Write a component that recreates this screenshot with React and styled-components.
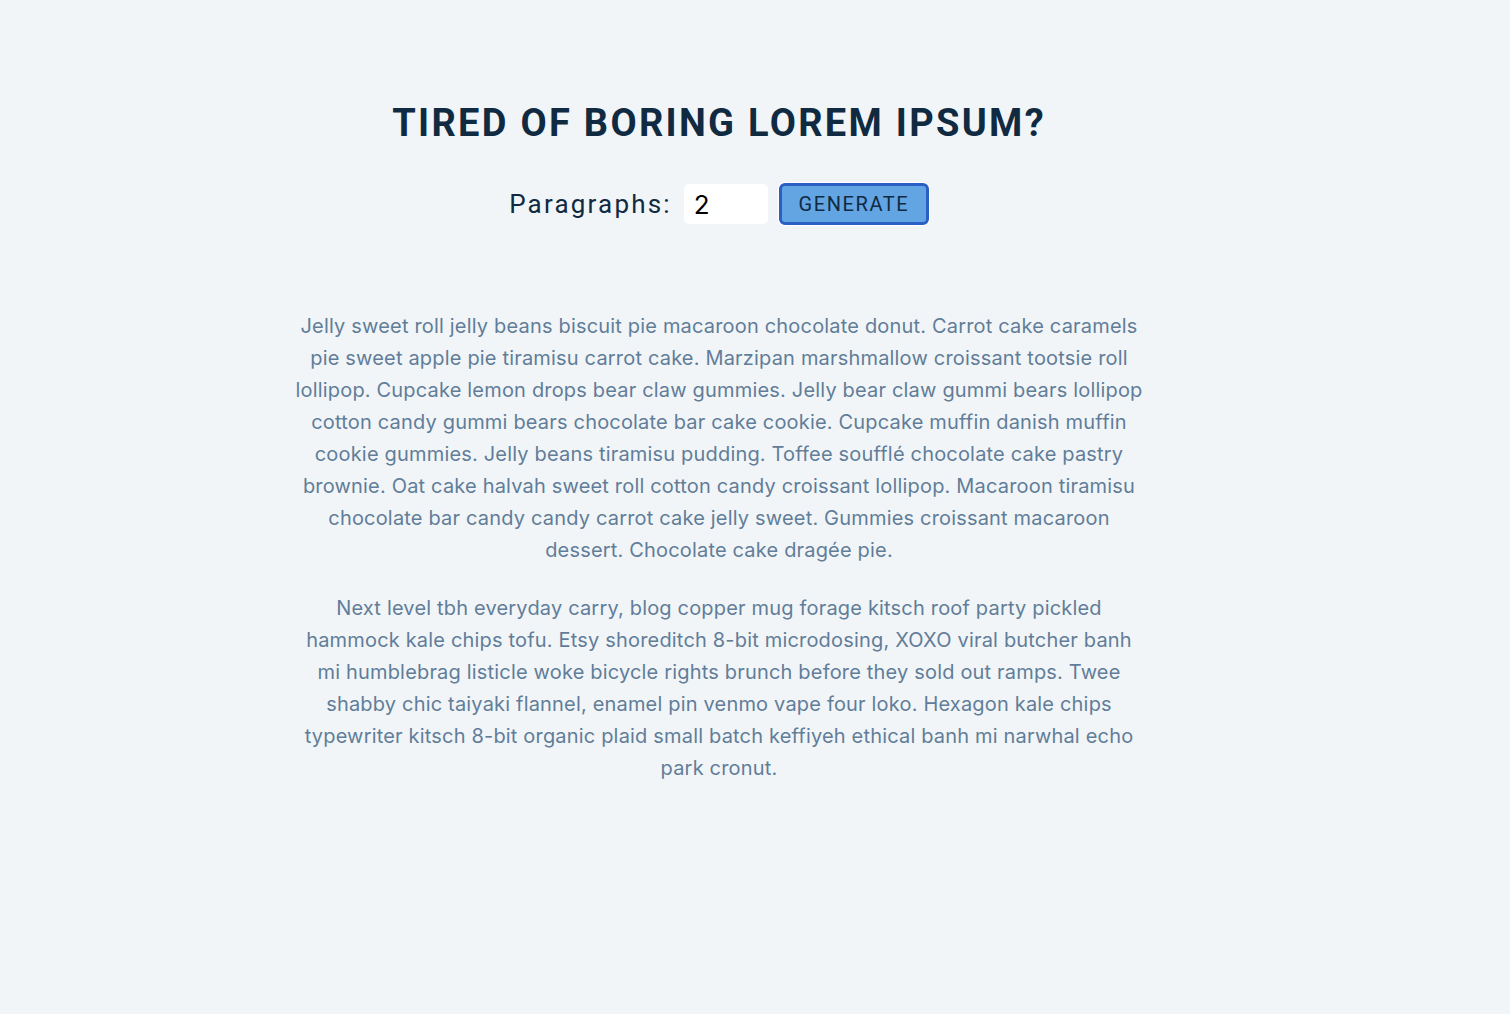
import React, { useState } from 'react'
import styled, { createGlobalStyle } from 'styled-components'

const GlobalStyle = createGlobalStyle`
  * { box-sizing: border-box; }
  body {
    margin: 0;
    background: #f1f5f8;
    color: #102a42;
    font-family: Inter, "Liberation Sans", sans-serif;
  }
`

const text = [
  'Jelly sweet roll jelly beans biscuit pie macaroon chocolate donut. Carrot cake caramels pie sweet apple pie tiramisu carrot cake. Marzipan marshmallow croissant tootsie roll lollipop. Cupcake lemon drops bear claw gummies. Jelly bear claw gummi bears lollipop cotton candy gummi bears chocolate bar cake cookie. Cupcake muffin danish muffin cookie gummies. Jelly beans tiramisu pudding. Toffee soufflé chocolate cake pastry brownie. Oat cake halvah sweet roll cotton candy croissant lollipop. Macaroon tiramisu chocolate bar candy candy carrot cake jelly sweet. Gummies croissant macaroon dessert. Chocolate cake dragée pie.',
  'Next level tbh everyday carry, blog copper mug forage kitsch roof party pickled hammock kale chips tofu. Etsy shoreditch 8-bit microdosing, XOXO viral butcher banh mi humblebrag listicle woke bicycle rights brunch before they sold out ramps. Twee shabby chic taiyaki flannel, enamel pin venmo vape four loko. Hexagon kale chips typewriter kitsch 8-bit organic plaid small batch keffiyeh ethical banh mi narwhal echo park cronut.',
]

const Page = () => {
  const [count, setCount] = useState(2)
  return (
    <Section>
      <GlobalStyle />
      <Title>tired of boring lorem ipsum?</Title>
      <Form onSubmit={(e) => e.preventDefault()}>
        <Label htmlFor='amount'>Paragraphs:</Label>
        <Input
          type='number'
          id='amount'
          value={count}
          onChange={(e) => setCount(e.target.value)}
        />
        <Button type='submit'>generate</Button>
      </Form>
      <Article>
        {text.map((item, index) => (
          <p key={index}>{item}</p>
        ))}
      </Article>
    </Section>
  )
}

export default Page

const Section = styled.section`
  width: 852px;
  margin: 0 auto;
  padding-top: 100px;
  position: relative;
  left: -36px;
  text-align: center;
`

const Title = styled.h3`
  margin: 0 -40px;
  font-family: Roboto, "Liberation Sans", sans-serif;
  font-weight: 700;
  font-size: 38px;
  line-height: 46px;
  letter-spacing: 2.3px;
  text-transform: uppercase;
  color: #102a42;
`

const Form = styled.form`
  display: flex;
  justify-content: center;
  align-items: center;
  margin-top: 37px;
  margin-bottom: 85px;
`

const Label = styled.label`
  font-family: Roboto, "Liberation Sans", sans-serif;
  font-size: 26px;
  letter-spacing: 2.2px;
  color: #102a42;
  margin-right: 12px;
`

const Input = styled.input`
  width: 84px;
  height: 40px;
  padding: 0 10px;
  border: none;
  border-radius: 5px;
  background: #fff;
  font-family: Inter, "Liberation Sans", sans-serif;
  font-size: 26px;
  color: #000;
  margin-right: 11px;
  outline: none;
  -moz-appearance: textfield;
  &::-webkit-inner-spin-button,
  &::-webkit-outer-spin-button {
    -webkit-appearance: none;
    margin: 0;
  }
`

const Button = styled.button`
  width: 150px;
  height: 42px;
  background: #63a4e3;
  border: 3px solid #2a5fc4;
  border-radius: 6px;
  box-shadow: 0 0 0 1px #fff;
  font-family: Roboto, "Liberation Sans", sans-serif;
  font-size: 20px;
  letter-spacing: 1.6px;
  text-transform: uppercase;
  color: #102a42;
  cursor: pointer;
`

const Article = styled.article`
  p {
    margin: 0 0 26px;
    font-size: 20px;
    line-height: 32px;
    letter-spacing: 0.18px;
    color: #617d98;
  }
`
